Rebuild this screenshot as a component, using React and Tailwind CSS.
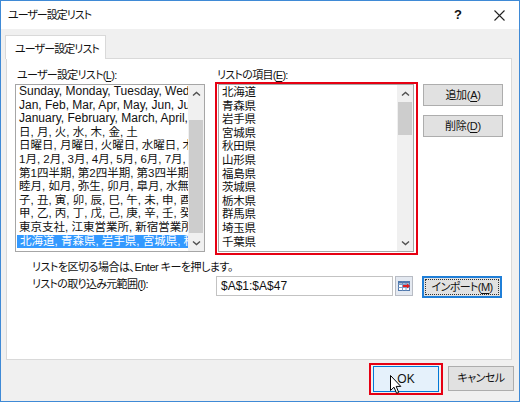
const LEFT_ITEMS = [
  "Sunday, Monday, Tuesday, Wednesday, Thursday",
  "Jan, Feb, Mar, Apr, May, Jun, Jul, Aug, Sep",
  "January, February, March, April, May, June",
  "日, 月, 火, 水, 木, 金, 土",
  "日曜日, 月曜日, 火曜日, 水曜日, 木曜日, 金曜日",
  "1月, 2月, 3月, 4月, 5月, 6月, 7月, 8月, 9月",
  "第1四半期, 第2四半期, 第3四半期, 第4四半期",
  "睦月, 如月, 弥生, 卯月, 皐月, 水無月, 文月",
  "子, 丑, 寅, 卯, 辰, 巳, 午, 未, 申, 酉, 戌, 亥",
  "甲, 乙, 丙, 丁, 戊, 己, 庚, 辛, 壬, 癸",
  "東京支社, 江東営業所, 新宿営業所, 渋谷営業所",
  "北海道, 青森県, 岩手県, 宮城県, 秋田県, 山形県",
];

const RIGHT_ITEMS = [
  "北海道", "青森県", "岩手県", "宮城県", "秋田県", "山形県",
  "福島県", "茨城県", "栃木県", "群馬県", "埼玉県", "千葉県",
];

// rows 0-2 are latin, the rest hold kanji
const isLatin = (i) => i < 3;

function Chevron({ down = false }) {
  return (
    <svg width="9" height="6" viewBox="0 0 9 6">
      <path
        d={down ? "M1 1.5 L4.5 4.5 L8 1.5" : "M1 4.5 L4.5 1.5 L8 4.5"}
        fill="none"
        stroke="#505050"
        strokeWidth="1.4"
      />
    </svg>
  );
}

function ScrollBar({ thumbTop, thumbHeight }) {
  return (
    <div className="w-[16px] h-full bg-[#f0f0f0] flex flex-col shrink-0">
      <div className="h-[17px] flex items-center justify-center shrink-0">
        <Chevron />
      </div>
      <div className="flex-1 relative">
        <div
          className="absolute left-[1px] right-[1px] bg-[#cdcdcd]"
          style={{ top: thumbTop, height: thumbHeight }}
        />
      </div>
      <div className="h-[17px] flex items-center justify-center shrink-0">
        <Chevron down />
      </div>
    </div>
  );
}

function Mn({ children }) {
  return <span className="underline underline-offset-2">{children}</span>;
}

function Btn({ children, className = "" }) {
  return (
    <div
      className={
        "h-[22px] w-[80px] bg-[#e1e1e1] border border-[#adadad] flex items-center justify-center text-[11px] tracking-[-0.3px] " +
        className
      }
    >
      {children}
    </div>
  );
}

function RangeIcon() {
  return (
    <svg width="18" height="20" viewBox="0 0 18 20">
      <rect x="0.5" y="0.5" width="17" height="19" fill="#e4e9f1" stroke="#b8bcc4" />
      <rect x="3.5" y="5.5" width="11" height="9" fill="#ffffff" stroke="#4f78ad" />
      <path d="M3.5 8.5 H14.5 M3.5 11.5 H14.5 M7.5 5.5 V14.5 M11 5.5 V14.5" stroke="#7f9dc6" />
      <rect x="3.5" y="5.5" width="11" height="2" fill="#4f78ad" />
      <path d="M8 9 L12 9 L12 7.5 L15 10 L12 12.5 L12 11 L8 11 Z" fill="#e02020" />
    </svg>
  );
}

export default function App() {
  return (
    <div
      className="w-[520px] h-[402px] bg-[#f0f0f0] border border-[#3f8ad6] flex flex-col text-[#111] [font-feature-settings:'palt'] overflow-hidden"
      style={{ fontFamily: '"Liberation Sans", "Noto Sans CJK JP", sans-serif' }}
    >
      {/* title bar */}
      <div className="h-[28px] bg-white flex items-center shrink-0">
        <div className="pl-[7px] text-[11px] tracking-[-1px] flex-1 whitespace-nowrap">ユーザー設定リスト</div>
        <div className="w-[42px] text-center text-[13px] font-semibold">?</div>
        <div className="w-[40px] flex justify-center">
          <svg width="11" height="11" viewBox="0 0 11 11">
            <path d="M0.5 0.5 L10.5 10.5 M10.5 0.5 L0.5 10.5" stroke="#222" strokeWidth="1.1" />
          </svg>
        </div>
      </div>

      <div className="pt-[6px] pl-[4px]">
        {/* tab */}
        <div className="w-[101px] h-[24px] bg-white border border-[#d9d9d9] border-b-0 text-[11px] tracking-[-0.9px] whitespace-nowrap pl-[9px] pt-[5px] relative z-10">
          ユーザー設定リスト
        </div>

        {/* panel */}
        <div className="-mt-[1px] ml-[1px] w-[506px] h-[302px] bg-white border border-[#d9d9d9] pl-[8px] pt-[8px]">
          <div className="flex">
            {/* left column */}
            <div className="w-[190px]">
              <div className="h-[17px] text-[11px] tracking-[-0.7px] leading-[16px] pl-[2px] whitespace-nowrap">
                ユーザー設定リスト(<Mn>L</Mn>):
              </div>
              <div className="h-[168px] border border-[#a6a6a6] flex">
                <div className="flex-1 overflow-hidden">
                  {LEFT_ITEMS.map((t, i) => (
                    <div
                      key={i}
                      className={
                        "h-[13.6px] leading-[13.6px] whitespace-nowrap pl-[3px] " +
                        (isLatin(i) ? "text-[12px] " : "text-[11.5px] ") +
                        (i === LEFT_ITEMS.length - 1 ? "bg-[#3399ff] text-white ml-[1px] pl-[2px]" : "")
                      }
                    >
                      {t}
                    </div>
                  ))}
                </div>
                <ScrollBar thumbTop={18} thumbHeight={113} />
              </div>
            </div>

            {/* right column */}
            <div className="w-[196px] ml-[13px]">
              <div className="h-[17px] text-[11px] tracking-[-0.7px] leading-[16px] -ml-[1px] whitespace-nowrap">
                リストの項目(<Mn>E</Mn>):
              </div>
              <div className="h-[168px] border border-[#a6a6a6] flex relative">
                <div className="flex-1 overflow-hidden pl-[3px] pt-[1px]">
                  {RIGHT_ITEMS.map((t) => (
                    <div key={t} className="h-[13.6px] leading-[13.6px] text-[11.5px] tracking-[-0.3px] whitespace-nowrap">
                      {t}
                    </div>
                  ))}
                </div>
                <ScrollBar thumbTop={0} thumbHeight={33} />
                <div className="absolute -left-[4px] -top-[3px] -right-[5px] -bottom-[4px] border-2 border-[#e60012]" />
              </div>
            </div>

            {/* buttons */}
            <div className="ml-[9px] pt-[17px] flex flex-col gap-[9px]">
              <Btn>追加(<Mn>A</Mn>)</Btn>
              <Btn>削除(<Mn>D</Mn>)</Btn>
            </div>
          </div>

          <div className="ml-[17px] mt-[7px] text-[11px] tracking-[-0.5px] leading-[16px] whitespace-nowrap">
            リストを区切る場合は、Enter キーを押します。
          </div>
          <div className="flex mt-[1px] h-[22px]">
            <div className="ml-[17px] w-[184px] text-[11px] tracking-[-0.7px] leading-[16px] whitespace-nowrap">
              リストの取り込み元範囲(<Mn>I</Mn>):
            </div>
            <div className="w-[177px] h-[20px] border border-[#c3c3c3] text-[12px] leading-[18px] pl-[4px]">
              $A$1:$A$47
            </div>
            <div className="ml-[2px]">
              <RangeIcon />
            </div>
            <div className="ml-[9px] w-[80px] h-[22px] bg-[#e1e1e1] border-2 border-[#1f7fd8] p-[1px]">
              <div className="h-full border border-dotted border-[#333] flex items-center justify-center text-[11px] tracking-[-0.6px] whitespace-nowrap">
                インポート(<Mn>M</Mn>)
              </div>
            </div>
          </div>
        </div>
      </div>

      {/* bottom buttons */}
      <div className="flex justify-end pr-[5px] pt-[6px]">
        <div className="relative">
          <div className="w-[66px] h-[26px] bg-[#e5f1fb] border border-[#0078d7] flex items-center justify-center text-[12px]">
            OK
          </div>
          <div className="absolute -left-[4px] -top-[3px] -right-[4px] -bottom-[3px] border-2 border-[#e60012]" />
          <svg className="absolute left-[17px] top-[9px]" width="13" height="20" viewBox="0 0 13 20">
            <path
              d="M0.5 0.5 L0.5 15.5 L4 12.2 L6.6 18.3 L8.7 17.4 L6.2 11.4 L10.8 11.4 Z"
              fill="#fff"
              stroke="#000"
              strokeWidth="1"
              strokeLinejoin="round"
            />
          </svg>
        </div>
        <div className="ml-[9px] w-[66px] h-[25px] bg-[#e1e1e1] border border-[#adadad] flex items-center justify-center text-[11px] tracking-[-0.5px]">
          キャンセル
        </div>
      </div>
    </div>
  );
}
